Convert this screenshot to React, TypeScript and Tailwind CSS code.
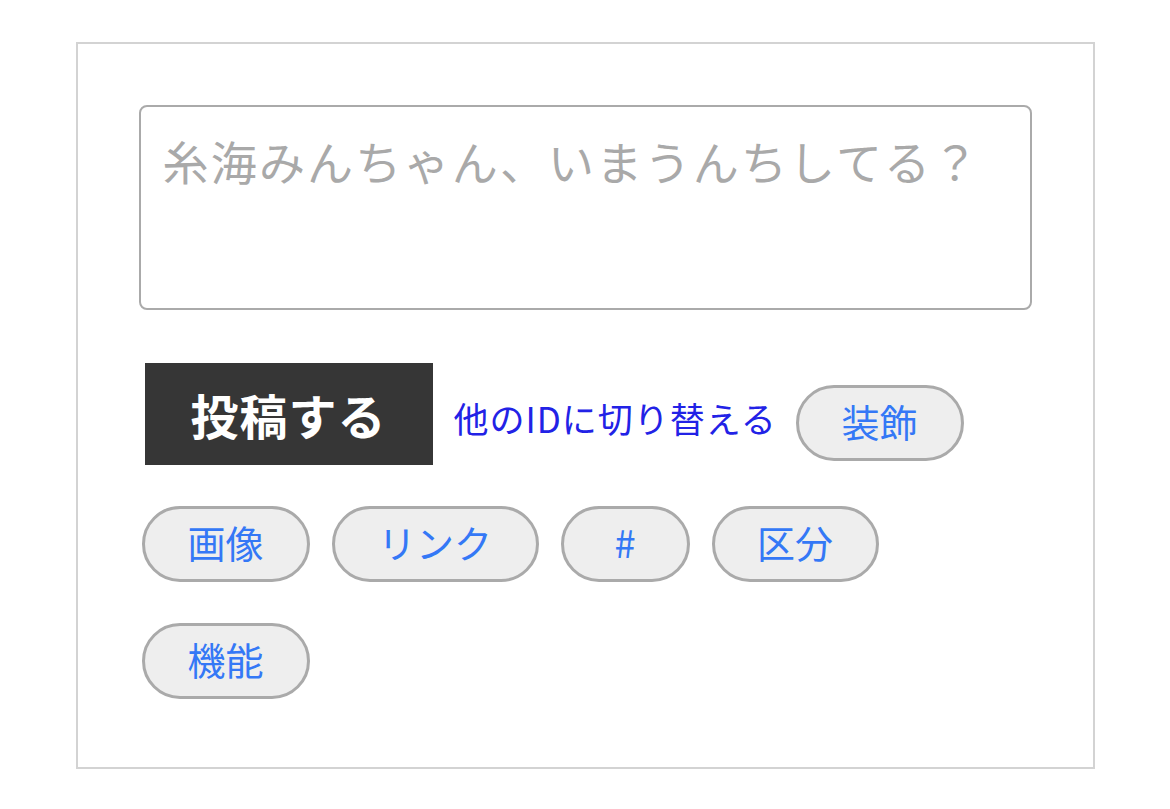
const jp = "font-['Noto_Sans_CJK_JP','Noto_Sans',sans-serif]"

const pills = [
  { label: '画像', w: 'w-[168px]' },
  { label: 'リンク', w: 'w-[207px]' },
  { label: '#', w: 'w-[129px]' },
  { label: '区分', w: 'w-[167px]' },
  { label: '機能', w: 'w-[168px]' },
]

function Pill({ label, w, className = '' }: { label: string; w: string; className?: string }) {
  return (
    <button
      className={`${w} h-[76px] shrink-0 rounded-full border-[3px] border-[#aaaaaa] bg-[#eeeeee] pb-[5px] text-[38px] leading-none text-[#3478f6] ${jp} ${className}`}
    >
      {label}
    </button>
  )
}

export default function App() {
  return (
    <div className="min-h-[809px] bg-white pt-[42px]">
      <div className="mx-auto w-[1019px] h-[727px] border-2 border-[#d3d3d3] p-[61px]">
        <textarea
          placeholder="糸海みんちゃん、いまうんちしてる？"
          className={`block w-[893px] h-[205px] resize-none rounded-[8px] border-2 border-[#aaaaaa] bg-white px-[22px] pt-[26px] text-[46px] leading-[1.2] tracking-[2.2px] text-[#333] placeholder:text-[#a9a9a9] outline-none ${jp}`}
        />

        <div className="mt-[53px] ml-[3px] flex w-[890px] flex-wrap items-start gap-x-[22px] gap-y-[41px]">
          <button
            className={`ml-[3px] w-[288px] h-[102px] shrink-0 bg-[#363636] text-[48px] font-bold leading-none tracking-[1px] text-white ${jp}`}
          >
            投稿する
          </button>
          <a
            href="#"
            className={`mt-[35px] -ml-[1px] w-[320px] shrink-0 whitespace-nowrap text-[35px] leading-[40px] tracking-[1px] text-[#2222e6] ${jp}`}
          >
            他のIDに切り替える
          </a>
          <Pill label="装飾" w="w-[168px]" className="mt-[22px]" />
          {pills.map(p => (
            <Pill key={p.label} label={p.label} w={p.w} />
          ))}
        </div>
      </div>
    </div>
  )
}
